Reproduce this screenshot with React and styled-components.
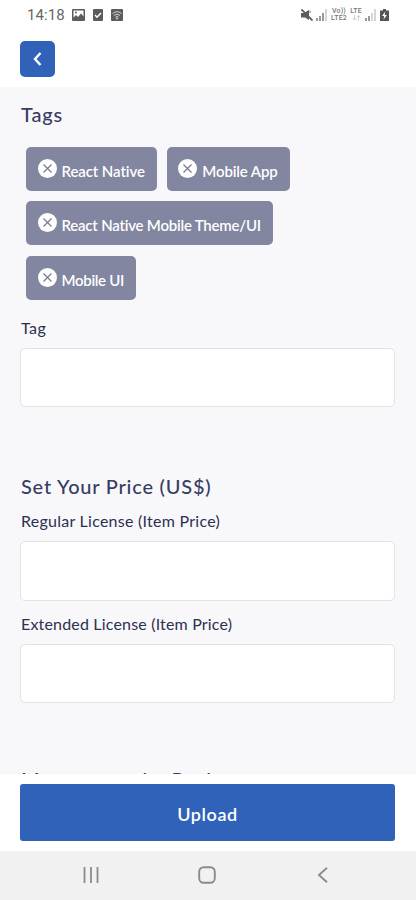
import React from 'react'
import styled, { createGlobalStyle } from 'styled-components'

const tagRows = [
  [
    { name: 'React Native', spacing: -0.1 },
    { name: 'Mobile App', spacing: -0.13 },
  ],
  [{ name: 'React Native Mobile Theme/UI', spacing: -0.22 }],
  [{ name: 'Mobile UI', spacing: -0.32 }],
]

const SignalIcon = ({ level }) => (
  <svg width="12" height="12" viewBox="0 0 12 12">
    {[3, 5, 8, 12].map((h, idx) => (
      <rect key={h} x={idx * 3} y={12 - h} width="2" height={h} fill={idx < level ? '#999' : '#d6d6d6'} />
    ))}
  </svg>
)

const StatusBar = () => (
  <StatusArea>
    <Clock>14:18</Clock>
    <svg width="13" height="12" viewBox="0 0 13 12">
      <path fillRule="evenodd" fill="#5c5c5c" d="M1 0h11a1 1 0 0 1 1 1v10a1 1 0 0 1-1 1H1a1 1 0 0 1-1-1V1a1 1 0 0 1 1-1zM1.500 1.500v7L4 6l2 2 3-3.500 2.500 3v-6z" />
      <circle cx="4" cy="3.500" r="1" fill="#5c5c5c" />
    </svg>
    <svg width="10" height="12" viewBox="0 0 10 12">
      <rect width="10" height="12" rx="1" fill="#5c5c5c" />
      <path d="M2 6l2 2.200L8 4" fill="none" stroke="#fff" strokeWidth="1.500" />
    </svg>
    <svg width="12" height="12" viewBox="0 0 12 12">
      <rect width="12" height="12" rx="1" fill="#5c5c5c" />
      <path d="M1.500 4.500Q6 1 10.500 4.500M3 6.400Q6 4 9 6.400M4.500 8.100Q6 7 7.500 8.100" fill="none" stroke="#ddd" strokeWidth="0.900" />
      <circle cx="6" cy="9.500" r="0.900" fill="#ddd" />
    </svg>
    <StatusRight>
      <svg width="12" height="12" viewBox="0 0 12 12">
        <path d="M0 4h3L8 1v10L4 8.500H0z" fill="#5c5c5c" />
        <path d="M.500 .500l11 11" stroke="#5c5c5c" strokeWidth="1.800" />
        <path d="M9 1.500v2.500" stroke="#777" />
      </svg>
      <SignalIcon level={3} />
      <Network $width={16}>
        <span>Vo))</span>
        <span>LTE2</span>
      </Network>
      <Network $width={12}>
        <span>LTE</span>
        <svg width="9" height="6" viewBox="0 0 9 6">
          <path d="M2.500 0v5M.500 3l2 2 2-2M6.500 6V1M4.800 2.500l1.700-2 1.700 2" fill="none" stroke="#c4c4c4" strokeWidth="0.800" />
        </svg>
      </Network>
      <SignalIcon level={2} />
      <svg width="9" height="12" viewBox="0 0 9 12">
        <path d="M3 0h3v1.500h3V12H0V1.500h3z" fill="#555" />
        <path d="M5.300 2.500L2 7h2.200l-.700 3.500L7 6H4.700z" fill="#fff" />
      </svg>
    </StatusRight>
  </StatusArea>
)

const Tag = ({ name, spacing }) => (
  <TagChip $spacing={spacing}>
    <button type="button" aria-label="remove">
      <svg width="9" height="9" viewBox="0 0 9 9">
        <path d="M.500 .500l8 8M8.500 .500l-8 8" stroke="#777b91" strokeWidth="1.200" />
      </svg>
    </button>
    <span>{name}</span>
  </TagChip>
)

const Field = ({ label, spacing }) => (
  <FieldArea $spacing={spacing}>
    <span>{label}</span>
    <input type="text" />
  </FieldArea>
)

const App = () => {
  return (
    <Screen>
      <GlobalStyle />
      <StatusBar />
      <Header>
        <BackButton type="button" aria-label="back">
          <svg width="9" height="14" viewBox="0 0 9 14">
            <path d="M7.500 1L2 7l5.500 6" fill="none" stroke="#fff" strokeWidth="2.400" />
          </svg>
        </BackButton>
      </Header>
      <Content>
        <Title $spacing={0.8}>Tags</Title>
        <TagList>
          {tagRows.map((row, idx) => (
            <TagRow key={idx}>
              {row.map(tag => <Tag key={tag.name} {...tag} />)}
            </TagRow>
          ))}
        </TagList>
        <Field label="Tag" spacing={0.4} />
        <Section $top={66}>
          <Title $spacing={0.78}>Set Your Price (US$)</Title>
          <Field label="Regular License (Item Price)" spacing={0.26} />
          <Field label="Extended License (Item Price)" spacing={0.18} />
        </Section>
        <Section $top={63}>
          <Title $spacing={0.7}>Message to the Reviewer</Title>
        </Section>
      </Content>
      <Footer>
        <UploadButton type="button">Upload</UploadButton>
      </Footer>
      <NavBar>
        <svg width="16" height="16" viewBox="0 0 16 16">
          <path d="M1.500 0v16M8 0v16M14.500 0v16" stroke="#8b8b8b" strokeWidth="1.800" />
        </svg>
        <svg width="18" height="18" viewBox="0 0 18 18">
          <rect x="1.200" y="1.200" width="15.600" height="15.600" rx="4.500" fill="none" stroke="#8b8b8b" strokeWidth="1.900" />
        </svg>
        <svg width="16" height="16" viewBox="0 0 16 16">
          <path d="M12 .700L4 8l8 7.300" fill="none" stroke="#8b8b8b" strokeWidth="1.900" />
        </svg>
      </NavBar>
    </Screen>
  )
}

const GlobalStyle = createGlobalStyle`
  * {
    box-sizing: border-box;
  }

  body {
    margin: 0;
    font-family: Lato, sans-serif;
  }

  button {
    border: 0;
    padding: 0;
    font-family: inherit;
  }
`

const Screen = styled.div`
  display: flex;
  flex-direction: column;
  height: 900px;
  overflow: hidden;
  background-color: #fff;
`

const StatusArea = styled.div`
  display: flex;
  align-items: center;
  height: 30px;
  padding: 0 27px;
  flex-shrink: 0;

  > svg {
    margin-right: 8px;
  }
`

const Clock = styled.span`
  width: 45px;
  color: #666;
  font-family: Roboto, sans-serif;
  font-size: 15px;
  letter-spacing: 0.1px;
`

const StatusRight = styled.div`
  display: flex;
  align-items: center;
  gap: 3px;
  margin-left: auto;
`

const Network = styled.div`
  display: flex;
  flex-direction: column;
  align-items: center;
  width: ${({ $width }) => $width}px;
  height: 15px;
  color: #777;
  font-family: Roboto, sans-serif;
  font-size: 7px;
  font-weight: 500;
  line-height: 7.5px;
  letter-spacing: 0.2px;
`

const Header = styled.header`
  height: 57px;
  padding: 11px 20px 0;
  flex-shrink: 0;
`

const BackButton = styled.button`
  display: flex;
  align-items: center;
  justify-content: center;
  width: 35px;
  height: 36px;
  border-radius: 5px;
  background-color: #2f62b8;
`

const Content = styled.main`
  height: 687px;
  padding: 14px 21px 0;
  flex-shrink: 0;
  overflow: hidden;
  background-color: #f8f8fb;
`

const Title = styled.h2`
  margin: 0;
  color: #393d63;
  font-size: 20px;
  font-weight: 500;
  line-height: 26px;
  letter-spacing: ${({ $spacing }) => $spacing}px;
  white-space: nowrap;
`

const TagList = styled.div`
  display: flex;
  flex-direction: column;
  gap: 10.4px;
  padding: 20px 5px 0;
  margin-bottom: 17px;
`

const TagRow = styled.div`
  display: flex;
  gap: 10px;
`

const TagChip = styled.div`
  display: flex;
  align-items: center;
  height: 44px;
  padding: 0 12px 0 11.5px;
  border-radius: 5px;
  background-color: #8286a0;
  color: #fff;
  font-size: 15px;
  font-weight: 600;
  letter-spacing: ${({ $spacing }) => $spacing}px;
  white-space: nowrap;

  button {
    display: flex;
    align-items: center;
    justify-content: center;
    width: 19px;
    height: 19px;
    margin: 0 5px 1px 0;
    border-radius: 50%;
    background-color: #fff;
  }

  span {
    padding-top: 4px;
  }
`

const FieldArea = styled.label`
  display: block;
  color: #2c3050;
  font-size: 16px;
  line-height: 22px;
  letter-spacing: ${({ $spacing }) => $spacing}px;

  & + & {
    margin-top: 12px;
  }

  input {
    display: block;
    width: 375px;
    height: 59.5px;
    margin: 9px 0 0 -1px;
    border: 1px solid #e2e3e6;
    border-radius: 5px;
    background-color: #fff;
  }
`

const Section = styled.section`
  margin-top: ${({ $top }) => $top}px;

  ${Title} {
    margin-bottom: 11px;
  }
`

const Footer = styled.footer`
  height: 77px;
  padding: 10px 21px 0 20px;
  flex-shrink: 0;
`

const UploadButton = styled.button`
  width: 100%;
  height: 57px;
  border-radius: 3px;
  background-color: #2f62b8;
  color: #fff;
  font-size: 18px;
  font-weight: 600;
  line-height: 61px;
  letter-spacing: 0.6px;
`

const NavBar = styled.nav`
  display: flex;
  align-items: center;
  justify-content: space-between;
  height: 49px;
  padding: 0 85px 1px 83px;
  background-color: #f1f1f1;
`

export default App
